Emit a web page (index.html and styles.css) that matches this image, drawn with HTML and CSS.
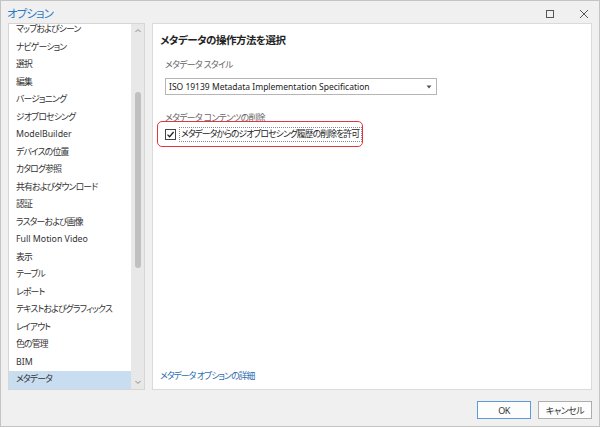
FILE: index.html
```html
<!DOCTYPE html>
<html lang="ja">
<head>
    <meta charset="UTF-8">
    <meta name="viewport" content="width=device-width, initial-scale=1.0">
    <title>オプション</title>
    <link rel="stylesheet" href="styles.css">
</head>
<body>
    <div class="window">
        <div class="titlebar">
            <span class="title">オプション</span>
            <div class="window-buttons">
                <svg class="win-icon" width="10" height="10" viewBox="0 0 10 10"><rect x="1.5" y="1.5" width="7" height="7" fill="none" stroke="#555" stroke-width="1"/></svg>
                <svg class="win-icon" width="10" height="10" viewBox="0 0 10 10"><path d="M1 1 L9 9 M9 1 L1 9" stroke="#555" stroke-width="1"/></svg>
            </div>
        </div>

        <div class="main">
            <div class="nav-panel">
                <div class="nav-list">
                    <div class="nav-items">
                        <div class="nav-item">マップおよびシーン</div>
                        <div class="nav-item">ナビゲーション</div>
                        <div class="nav-item">選択</div>
                        <div class="nav-item">編集</div>
                        <div class="nav-item">バージョニング</div>
                        <div class="nav-item">ジオプロセシング</div>
                        <div class="nav-item latin">ModelBuilder</div>
                        <div class="nav-item">デバイスの位置</div>
                        <div class="nav-item">カタログ参照</div>
                        <div class="nav-item">共有およびダウンロード</div>
                        <div class="nav-item">認証</div>
                        <div class="nav-item">ラスターおよび画像</div>
                        <div class="nav-item latin">Full Motion Video</div>
                        <div class="nav-item">表示</div>
                        <div class="nav-item">テーブル</div>
                        <div class="nav-item">レポート</div>
                        <div class="nav-item">テキストおよびグラフィックス</div>
                        <div class="nav-item">レイアウト</div>
                        <div class="nav-item">色の管理</div>
                        <div class="nav-item latin">BIM</div>
                        <div class="nav-item selected">メタデータ</div>
                    </div>
                </div>
                <div class="scrollbar">
                    <svg class="scroll-arrow" width="8" height="6" viewBox="0 0 8 6"><path d="M1.5 4 L4 1.5 L6.5 4" fill="none" stroke="#8a8a8a" stroke-width="1"/></svg>
                    <div class="scroll-thumb"></div>
                    <div class="scroll-space"></div>
                    <svg class="scroll-arrow" width="8" height="6" viewBox="0 0 8 6"><path d="M1.5 2 L4 4.5 L6.5 2" fill="none" stroke="#8a8a8a" stroke-width="1"/></svg>
                </div>
            </div>

            <div class="content-panel">
                <h2 class="panel-title">メタデータの操作方法を選択</h2>

                <div class="field-label">メタデータ スタイル</div>
                <div class="dropdown">
                    <span>ISO 19139 Metadata Implementation Specification</span>
                    <svg width="6" height="4" viewBox="0 0 6 4"><path d="M0.5 0.5 L5.5 0.5 L3 3.5 Z" fill="#555"/></svg>
                </div>

                <div class="field-label section-gap">メタデータ コンテンツの削除</div>
                <div class="highlight">
                    <span class="checkbox">
                        <svg width="9" height="9" viewBox="0 0 9 9"><path d="M1.5 4.6 L3.6 6.7 L7.6 2" fill="none" stroke="#222" stroke-width="1.3"/></svg>
                    </span>
                    <span class="check-label">メタデータからのジオプロセシング履歴の削除を許可</span>
                </div>

                <a class="details-link" href="#">メタデータ オプションの詳細</a>
            </div>
        </div>

        <div class="footer">
            <button class="btn btn-default">OK</button>
            <button class="btn">キャンセル</button>
        </div>
    </div>
</body>
</html>
```

FILE: styles.css
```css
body {
    margin: 0;
    padding: 0;
    font-family: "Noto Sans", "Noto Sans CJK JP", sans-serif;
    font-feature-settings: "palt";
    color: #222;
    background: #fff;
}
.window {
    width: 600px;
    height: 427px;
    box-sizing: border-box;
    border: 1px solid #c4c4c4;
    background-color: #f0f0f0;
    display: flex;
    flex-direction: column;
}
.titlebar {
    height: 22px;
    display: flex;
    align-items: center;
    justify-content: space-between;
    padding: 0 10px 0 6px;
}
.title {
    font-size: 11.5px;
    letter-spacing: -0.9px;
    color: #2a78c4;
    margin-top: 2px;
}
.window-buttons {
    display: flex;
    gap: 24px;
    align-items: center;
    margin-top: 4px;
}
.main {
    display: flex;
    gap: 7px;
    padding: 0 7px 0 7px;
    height: 367px;
}
.nav-panel {
    width: 137px;
    box-sizing: border-box;
    border: 1px solid #d6d6d6;
    display: flex;
    background-color: #fff;
}
.nav-list {
    flex: 1;
    overflow: hidden;
}
.nav-items {
    margin-top: -3px;
}
.nav-item {
    height: 17.5px;
    line-height: 17.5px;
    padding-left: 7px;
    font-size: 8.8px;
    letter-spacing: -0.8px;
    color: #333;
    white-space: nowrap;
}
.nav-item.latin {
    letter-spacing: 0;
}
.nav-item.selected {
    background-color: #c8ddf0;
}
.scrollbar {
    width: 13px;
    background-color: #e8e8e8;
    display: flex;
    flex-direction: column;
    align-items: center;
}
.scroll-arrow {
    margin: 4px 0;
    flex-shrink: 0;
}
.scroll-thumb {
    width: 6px;
    height: 176px;
    margin-top: 54px;
    border-radius: 3px;
    background-color: #c0c0c0;
}
.scroll-space {
    flex: 1;
}
.content-panel {
    flex: 1;
    box-sizing: border-box;
    border: 1px solid #dadada;
    background-color: #fff;
    padding: 9px 7px 6px 7px;
    display: flex;
    flex-direction: column;
    align-items: flex-start;
}
.panel-title {
    margin: 0;
    font-size: 10.5px;
    letter-spacing: -0.5px;
    font-weight: bold;
    color: #222;
    line-height: 14px;
}
.field-label {
    font-size: 8.8px;
    letter-spacing: -0.6px;
    color: #666;
    margin: 11px 0 0 5px;
    line-height: 14px;
}
.section-gap {
    margin-top: 16px;
}
.dropdown {
    width: 272px;
    height: 17px;
    box-sizing: border-box;
    border: 1px solid #b5b5b5;
    margin: 6px 0 0 5px;
    display: flex;
    align-items: center;
    justify-content: space-between;
    padding: 0 4px 0 3px;
    font-size: 8.5px;
    color: #222;
}
.highlight {
    display: flex;
    align-items: center;
    gap: 4px;
    width: 206px;
    height: 26px;
    box-sizing: border-box;
    border: 1.5px solid #e4353e;
    border-radius: 5px;
    padding-left: 7px;
    margin: -4px 0 0 -3px;
}
.checkbox {
    width: 11px;
    height: 11px;
    box-sizing: border-box;
    border: 1px solid #444;
    display: flex;
    align-items: center;
    justify-content: center;
    background: #fff;
}
.check-label {
    font-size: 8.8px;
    letter-spacing: -0.9px;
    color: #222;
    outline: 1px dotted #888;
    padding: 0 2px 0 1px;
    line-height: 13px;
    white-space: nowrap;
}
.details-link {
    margin-top: auto;
    font-size: 8.8px;
    letter-spacing: -0.9px;
    color: #2c6db0;
    text-decoration: none;
    line-height: 14px;
}
.footer {
    display: flex;
    justify-content: flex-end;
    gap: 7px;
    padding: 11px 7px 0 0;
}
.btn {
    width: 54px;
    height: 18px;
    box-sizing: border-box;
    border: 1px solid #adadad;
    background-color: #fdfdfd;
    font-family: "Noto Sans", "Noto Sans CJK JP", sans-serif;
    font-feature-settings: "palt";
    font-size: 9px;
    letter-spacing: -0.5px;
    color: #333;
    padding: 0;
}
.btn-default {
    border: 1.5px solid #5d9ad8;
}
```
